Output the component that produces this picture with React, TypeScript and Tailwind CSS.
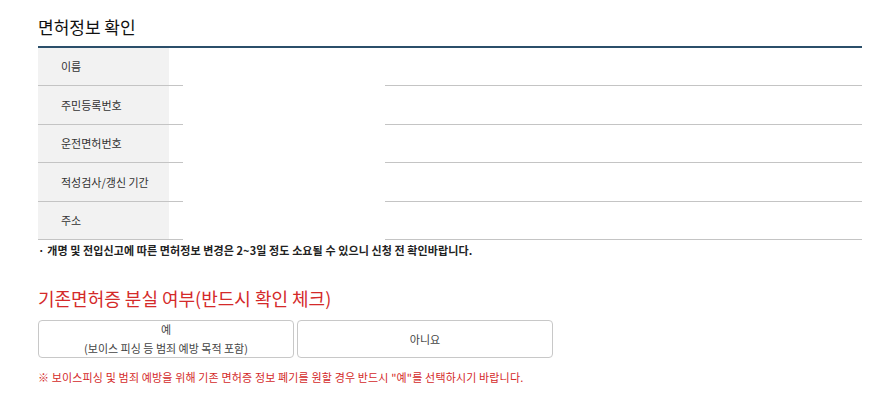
const FONT = '"Malgun Gothic", "Noto Sans CJK KR", "Noto Sans", sans-serif';

const ROWS = ["이름", "주민등록번호", "운전면허번호", "적성검사/갱신 기간", "주소"];

function InfoRow({ label }: { label: string }) {
  return (
    <div className="flex h-[38.4px] flex-col">
      <div className="flex flex-1">
        <div className="flex w-[131px] items-center bg-[#f2f2f2] pl-[23px] text-[11px] text-[#333]">
          {label}
        </div>
        <div className="flex-1" />
      </div>
      {/* bottom rule, broken where the value cell sits */}
      <div className="flex h-px">
        <div className="w-[145px] bg-[#c4c4c4]" />
        <div className="w-[202px]" />
        <div className="flex-1 bg-[#c4c4c4]" />
      </div>
    </div>
  );
}

export default function App() {
  return (
    <div className="min-h-[414px] bg-white" style={{ fontFamily: FONT }}>
      <div className="ml-[38px] w-[824px] pt-[15px]">
        <h2 className="h-[31px] text-[17px] leading-[24px] text-[#111]">면허정보 확인</h2>
        <div className="border-t-[2px] border-[#2b4f6a]">
          {ROWS.map((r) => (
            <InfoRow key={r} label={r} />
          ))}
        </div>
        <p className="mt-[2px] text-[11px] font-bold leading-[16px] tracking-[0.1px] text-[#222]">
          · 개명 및 전입신고에 따른 면허정보 변경은 2~3일 정도 소요될 수 있으니 신청 전 확인바랍니다.
        </p>

        <h3 className="mt-[28px] text-[18px] leading-[24px] text-[#d42a2a]">
          기존면허증 분실 여부(반드시 확인 체크)
        </h3>
        <div className="mt-[10px] flex gap-[3px]">
          <button className="flex h-[38px] w-[256px] flex-col items-center justify-center rounded-[4px] border border-[#c8c8c8] bg-white text-[11px] leading-[19px] text-[#444]">
            <span>예</span>
            <span>(보이스 피싱 등 범죄 예방 목적 포함)</span>
          </button>
          <button className="flex h-[38px] w-[256px] items-center justify-center rounded-[4px] border border-[#c8c8c8] bg-white text-[11px] text-[#444]">
            아니요
          </button>
        </div>
        <p className="mt-[11px] text-[11px] leading-[16px] tracking-[0.15px] text-[#d42a2a]">
          ※ 보이스피싱 및 범죄 예방을 위해 기존 면허증 정보 폐기를 원할 경우 반드시 "예"를 선택하시기 바랍니다.
        </p>
      </div>
    </div>
  );
}
